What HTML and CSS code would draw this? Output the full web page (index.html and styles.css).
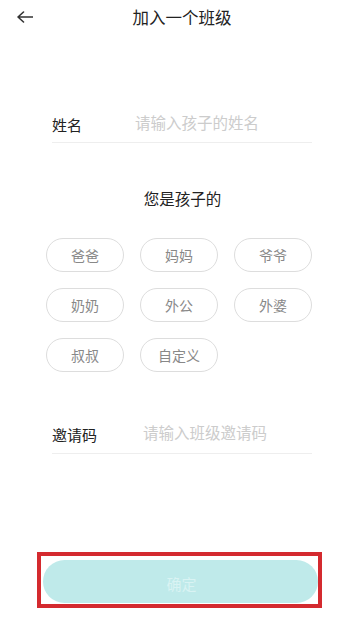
FILE: index.html
```html
<!DOCTYPE html>
<html lang="zh-CN">
<head>
<meta charset="utf-8">
<title>加入一个班级</title>
<link rel="stylesheet" href="styles.css">
</head>
<body>
<div class="page">
  <header class="topbar">
    <div class="back">
      <svg width="16" height="12" viewBox="0 0 16 12" fill="none" stroke="#333" stroke-width="1.6" stroke-linecap="round" stroke-linejoin="round"><path d="M6.5 1 L1 6 L6.5 11 M1 6 H15.5"/></svg>
    </div>
    <h1 class="title">加入一个班级</h1>
    <div></div>
  </header>

  <div class="field field-name">
    <span class="label">姓名</span>
    <span class="placeholder ph-name">请输入孩子的姓名</span>
  </div>

  <div class="question">您是孩子的</div>

  <div class="chips">
    <span class="chip">爸爸</span>
    <span class="chip">妈妈</span>
    <span class="chip">爷爷</span>
    <span class="chip">奶奶</span>
    <span class="chip">外公</span>
    <span class="chip">外婆</span>
    <span class="chip">叔叔</span>
    <span class="chip">自定义</span>
  </div>

  <div class="field field-code">
    <span class="label">邀请码</span>
    <span class="placeholder ph-code">请输入班级邀请码</span>
  </div>

  <div class="highlight">
    <div class="submit">确定</div>
  </div>
</div>
</body>
</html>
```

FILE: styles.css
```css
* { box-sizing: border-box; }
html, body { margin: 0; padding: 0; background: #fff; }
body {
  font-family: "Noto Sans CJK SC", "Noto Sans", sans-serif;
  color: #222;
}
.page { width: 364px; min-height: 624px; }

.topbar {
  height: 34px;
  display: grid;
  grid-template-columns: 1fr auto 1fr;
  align-items: center;
}
.back { padding-left: 17px; display: flex; align-items: center; }
.back svg { display: block; }
.title {
  margin: 0;
  font-size: 16.5px;
  font-weight: 400;
  line-height: 22px;
  color: #222;
}

.field {
  margin: 0 52px;
  display: flex;
  align-items: flex-end;
  border-bottom: 1px solid #eeeeee;
}
.field-name { margin-top: 81px; padding-bottom: 7px; height: 28px; }
.field-code { margin-top: 53px; padding-bottom: 8px; height: 29px; }
.label {
  font-size: 15px;
  line-height: 20px;
  color: #222;
}
.placeholder {
  font-size: 15.5px;
  line-height: 12px;
  color: #cccccc;
  margin-bottom: 7px;
}
.ph-name { margin-left: 53px; }
.ph-code { margin-left: 46px; }

.question {
  margin-top: 44px;
  text-align: center;
  font-size: 15.5px;
  line-height: 22px;
  color: #222;
  padding-left: 1px;
}

.chips {
  margin: 29px 0 0 46px;
  width: 266px;
  display: grid;
  grid-template-columns: repeat(3, 78px);
  column-gap: 16px;
  row-gap: 16px;
}
.chip {
  height: 34px;
  border: 1px solid #dddddd;
  border-radius: 17px;
  display: flex;
  align-items: center;
  justify-content: center;
  font-size: 14px;
  color: #888;
}

.highlight {
  margin: 98px 0 0 37px;
  width: 285px;
  height: 56px;
  border: 4px solid #d42a2f;
  padding: 4px 0 1px 2px;
}
.submit {
  height: 43px;
  border-radius: 21.5px;
  background: #bfeaea;
  color: #d9f3f3;
  font-size: 15px;
  display: flex;
  align-items: center;
  justify-content: center;
  padding: 4px 0 0 2px;
}
```
